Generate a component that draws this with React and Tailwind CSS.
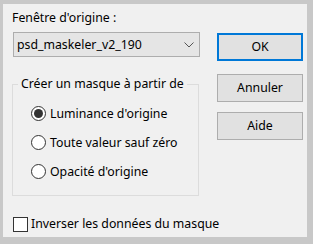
import React from "react";

function Radio({ checked, label }) {
  return (
    <div className="flex items-center h-[29px]">
      <span className="w-[15px] h-[15px] rounded-full border border-[#333333] bg-white flex items-center justify-center shrink-0">
        {checked && <span className="w-[9px] h-[9px] rounded-full bg-[#333333]" />}
      </span>
      <span className="ml-[4px] whitespace-nowrap">{label}</span>
    </div>
  );
}

function Button({ children, primary, className = "" }) {
  return (
    <div
      className={`w-[86px] h-[28px] bg-[#e1e1e1] flex items-center justify-center ${
        primary ? "border-2 border-[#0078d7]" : "border border-[#adadad]"
      } ${className}`}
    >
      {children}
    </div>
  );
}

export default function App() {
  return (
    <div className="w-[313px] h-[244px] bg-[#c8c8c8] pl-[3px] pt-[4px] pr-[6px] pb-[7px]">
      <div
        className="h-full bg-[#f0f0f0] flex text-black text-[12.3px] leading-[16px]"
        style={{ fontFamily: '"Noto Sans", "Open Sans", sans-serif' }}
      >
        <div className="pl-[9px] w-[196px] flex flex-col">
          <div className="mt-[6px] h-[16px] whitespace-nowrap">Fenêtre d'origine :</div>
          <div className="mt-[6px] ml-[1px] w-[187px] h-[25px] border border-[#adadad] bg-[#e5e5e5] flex items-center justify-between pl-[3px] pr-[4px]">
            <span>psd_maskeler_v2_190</span>
            <svg width="10" height="6" viewBox="0 0 10 6" className="mr-[1px]">
              <path d="M0.5 0.5 L5 5 L9.5 0.5" fill="none" stroke="#555555" strokeWidth="1" />
            </svg>
          </div>
          <fieldset className="mt-[19px] w-[187px] h-[120px] border border-[#dcdcdc]">
            <legend className="ml-[5px] px-[3px] h-[16px] whitespace-nowrap">Créer un masque à partir de</legend>
            <div className="pl-[18px] pt-[7px]">
              <Radio checked label="Luminance d'origine" />
              <Radio label="Toute valeur sauf zéro" />
              <Radio label="Opacité d'origine" />
            </div>
          </fieldset>
          <div className="mt-[20px] ml-[1px] flex items-center h-[16px]">
            <span className="w-[15px] h-[15px] border border-[#333333] bg-white shrink-0" />
            <span className="ml-[3px] whitespace-nowrap">Inverser les données du masque</span>
          </div>
        </div>
        <div className="ml-[18px] pt-[29px] flex flex-col">
          <Button primary>OK</Button>
          <Button className="mt-[13px]">Annuler</Button>
          <Button className="mt-[10px]">Aide</Button>
        </div>
      </div>
    </div>
  );
}
